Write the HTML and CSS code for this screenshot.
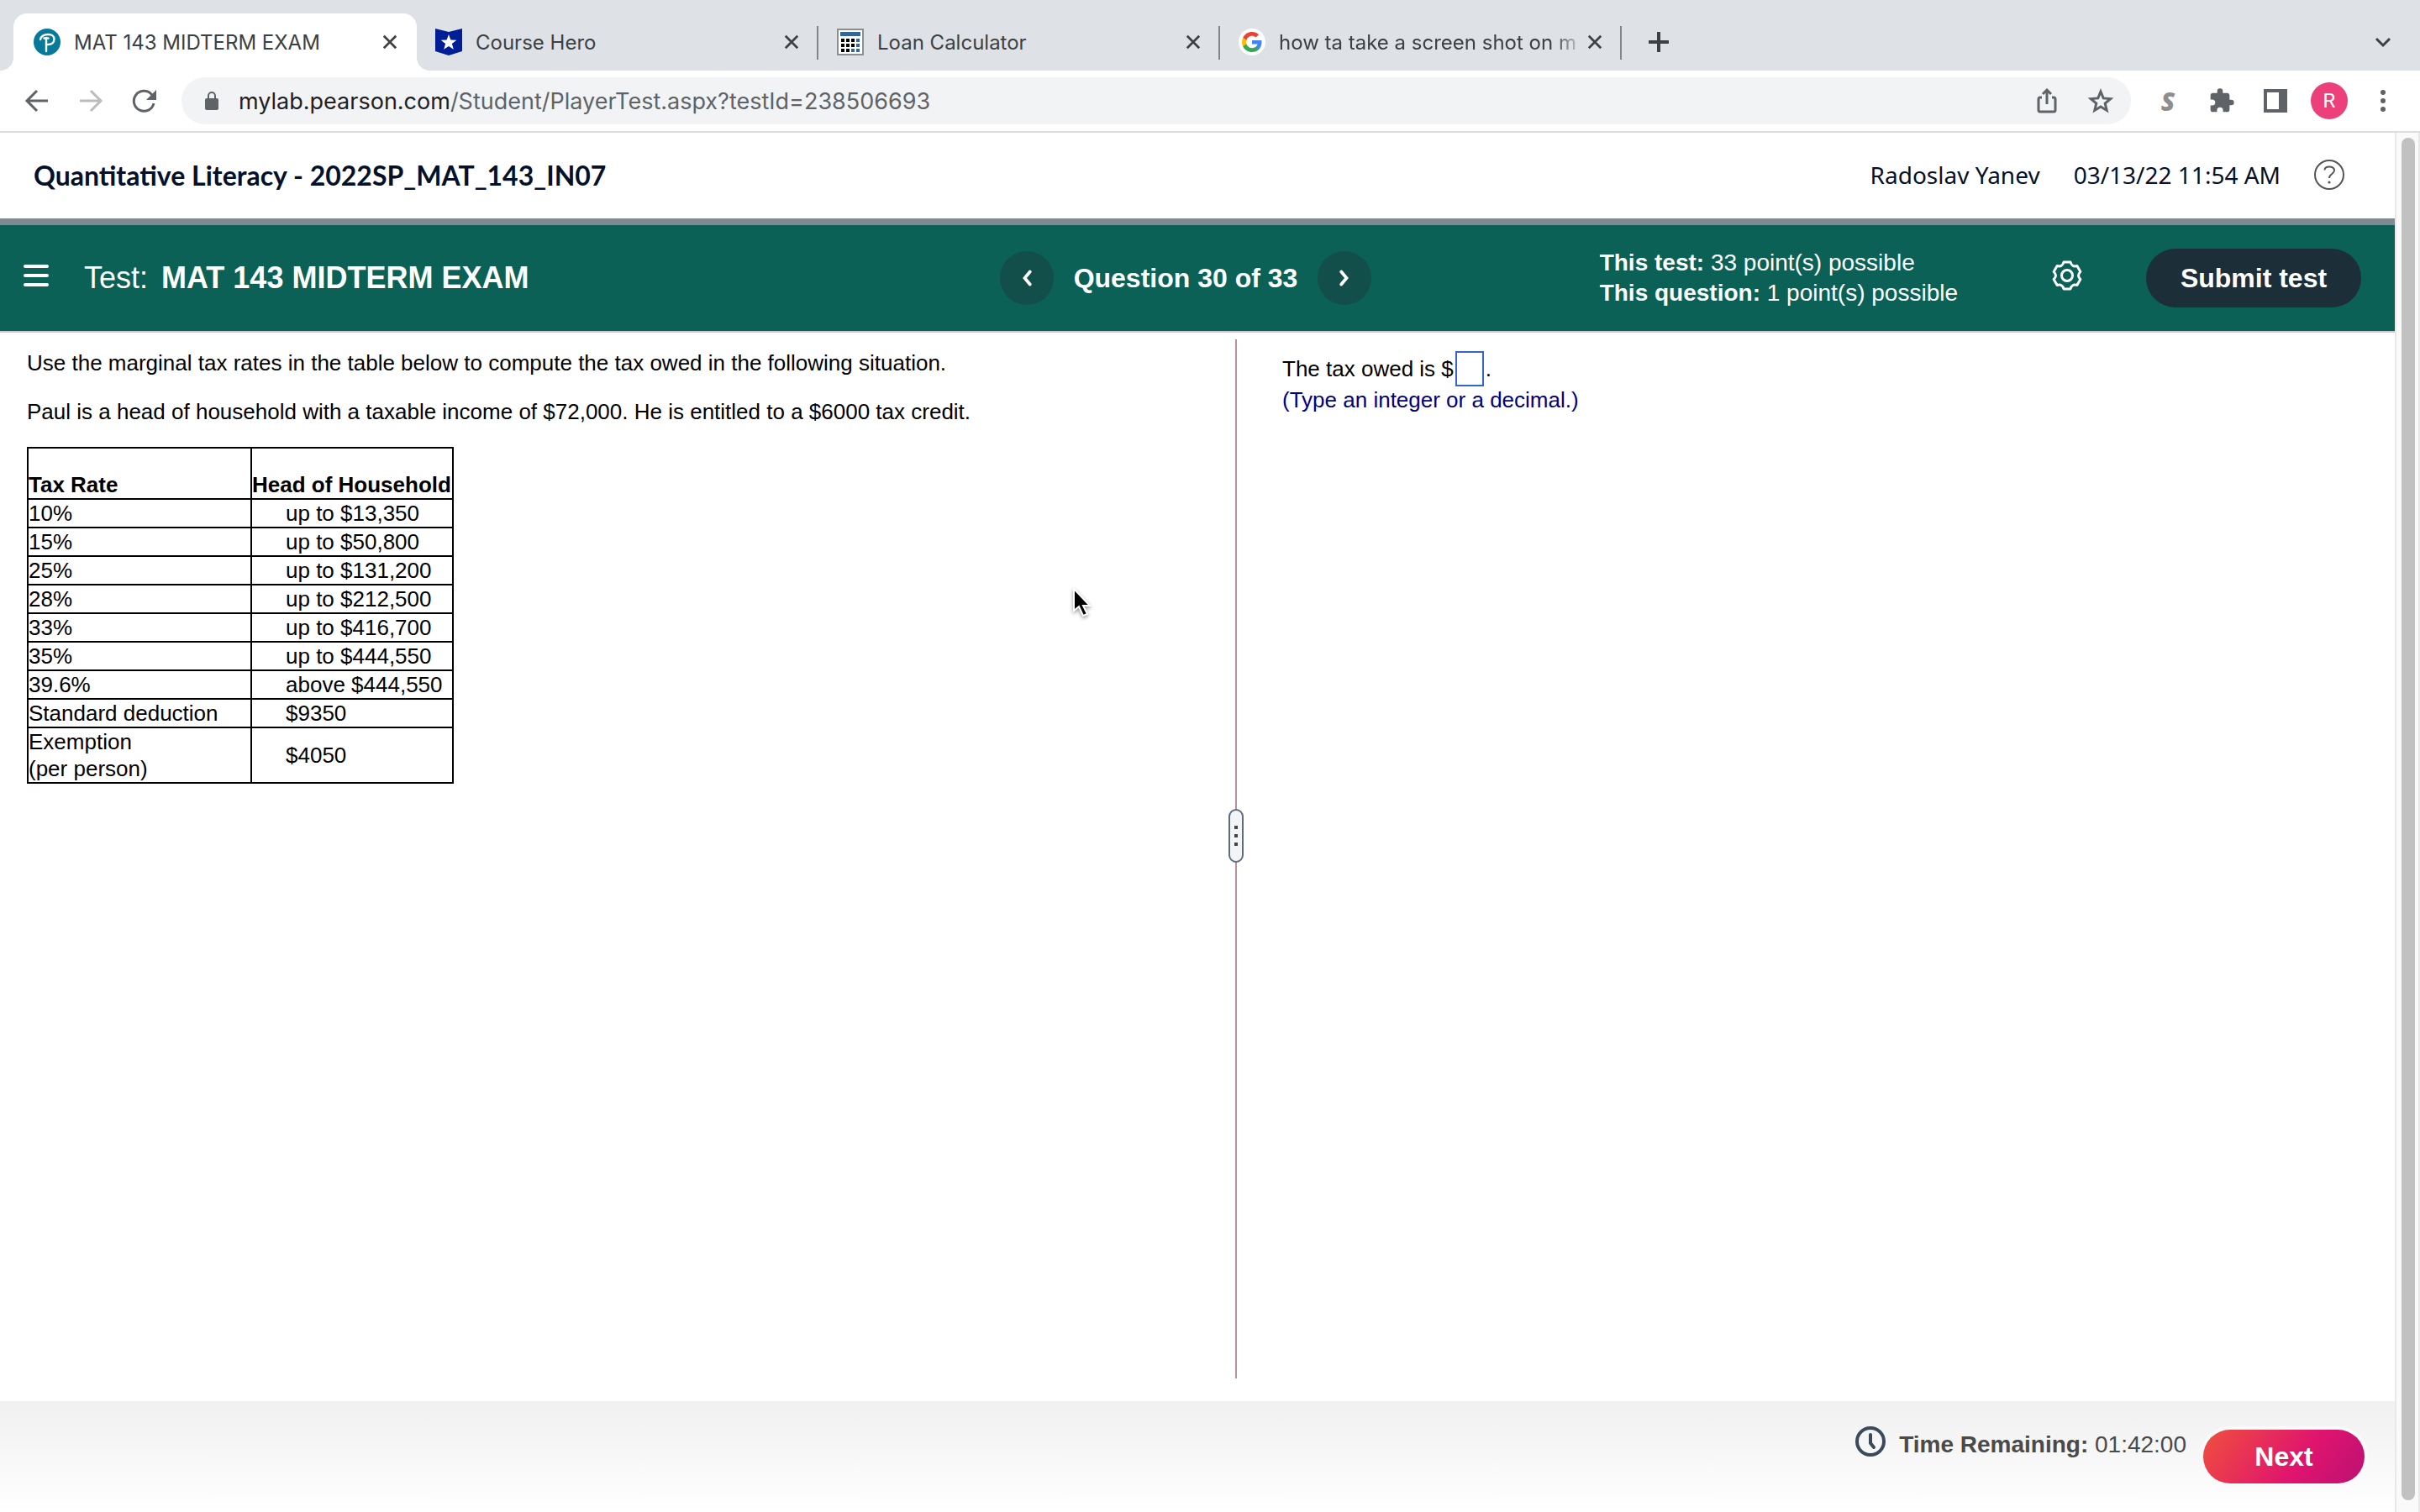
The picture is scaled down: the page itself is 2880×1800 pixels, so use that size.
FILE: index.html
```html
<!DOCTYPE html>
<html lang="en">
<head>
<meta charset="utf-8">
<title>MAT 143 MIDTERM EXAM</title>
<link rel="stylesheet" href="styles.css">
</head>
<body>
<div class="browser">
  <nav class="tabstrip" aria-label="Tabs">
    <div class="tab tab-active">
      <svg class="favicon" viewBox="0 0 32 32" aria-hidden="true"><circle cx="16" cy="16" r="16" fill="#077a9b"/><path d="M8 13c1-4 5-6 9.500-6 4 0 7 2 7 5.500 0 4-3 6.500-7.500 6.500M15 11v16M12.500 11.500h5" fill="none" stroke="#fff" stroke-width="2.400" stroke-linecap="round"/></svg>
      <a class="tab-title" href="#">MAT 143 MIDTERM EXAM</a>
      <button class="icon-button tab-close" aria-label="Close tab"><svg viewBox="0 0 20 20"><path d="M2 2l16 16M18 2L2 18"/></svg></button>
    </div>
    <div class="tab">
      <svg class="favicon" viewBox="0 0 32 32" aria-hidden="true"><path d="M0 0l16 4 16-4v27l-16 5-16-5z" fill="#001e96"/><path d="M16 7l2.400 6.600 7 .2-5.500 4.300 1.900 6.700-5.800-3.900-5.800 3.900 1.900-6.700-5.500-4.300 7-.2z" fill="#fff"/></svg>
      <a class="tab-title" href="#">Course Hero</a>
      <button class="icon-button tab-close" aria-label="Close tab"><svg viewBox="0 0 20 20"><path d="M2 2l16 16M18 2L2 18"/></svg></button>
    </div>
    <div class="tab tab-divided">
      <svg class="favicon" viewBox="0 0 32 32" aria-hidden="true"><path d="M1 1h30v30H1z" fill="#fff" stroke="#8e8e8e" stroke-width="2"/><path d="M4 4h24v5H4z" fill="#336699"/><path d="M5 12h4v4H5zm6 0h4v4h-4zm6 0h4v4h-4zM5 18h4v4H5zm6 0h4v4h-4zm6 0h4v4h-4zM5 24h4v4H5zm6 0h4v4h-4z" fill="#000"/><path d="M23 12h4v4h-4zm0 6h4v4h-4zm0 6h4v4h-4zm-6 0h4v4h-4z" fill="#336699"/></svg>
      <a class="tab-title" href="#">Loan Calculator</a>
      <button class="icon-button tab-close" aria-label="Close tab"><svg viewBox="0 0 20 20"><path d="M2 2l16 16M18 2L2 18"/></svg></button>
    </div>
    <div class="tab tab-divided tab-last">
      <svg class="favicon" viewBox="0 0 32 32" aria-hidden="true"><circle cx="16" cy="16" r="16" fill="#fff"/><g transform="translate(4 4)"><path fill="#4285F4" d="M23.500 12.300c0-.8-.1-1.600-.2-2.300H12v4.500h6.500c-.3 1.500-1.100 2.700-2.400 3.600v3h3.900c2.200-2.100 3.500-5.200 3.500-8.800z"/><path fill="#34A853" d="M12 24c3.200 0 6-1.100 8-2.900l-3.900-3c-1.100.7-2.500 1.200-4.100 1.200-3.100 0-5.800-2.100-6.700-5h-4v3.100C3.300 21.300 7.300 24 12 24z"/><path fill="#FBBC05" d="M5.300 14.300c-.5-1.500-.5-3.100 0-4.600V6.600h-4c-1.700 3.400-1.700 7.400 0 10.800z"/><path fill="#EA4335" d="M12 4.800c1.800 0 3.300.6 4.600 1.800L20 3.200C17.900 1.200 15.200 0 12 0 7.300 0 3.300 2.700 1.300 6.600l4 3.100c.9-2.800 3.600-4.900 6.700-4.900z"/></g></svg>
      <a class="tab-title tab-title-fade" href="#">how ta take a screen shot on m</a>
      <button class="icon-button tab-close" aria-label="Close tab"><svg viewBox="0 0 20 20"><path d="M2 2l16 16M18 2L2 18"/></svg></button>
    </div>
    <button class="icon-button new-tab" aria-label="New tab"><svg viewBox="0 0 24 24"><path d="M12 1v22M1 12h22"/></svg></button>
    <button class="icon-button tab-search" aria-label="Search tabs"><svg viewBox="0 0 20 20"><path d="M2 6l8 8 8-8"/></svg></button>
  </nav>

  <div class="toolbar">
    <div class="tool-group">
      <button class="icon-button tool" aria-label="Back"><svg viewBox="0 0 32 32"><path d="M29 16H4M16 4L4 16l12 12"/></svg></button>
      <button class="icon-button tool tool-off" aria-label="Forward"><svg viewBox="0 0 32 32"><path d="M3 16h25M16 4l12 12-12 12"/></svg></button>
      <button class="icon-button tool" aria-label="Reload"><svg viewBox="0 0 32 32"><path d="M27 19a12 12 0 1 1-3-11l3 3"/><path d="M30 3v12H18z" class="solid"/></svg></button>
    </div>
    <div class="omnibox">
      <svg class="lock" viewBox="0 0 16 22" aria-hidden="true"><path d="M4 9V5a4 4 0 0 1 8 0v4" fill="none" stroke="#5f6368" stroke-width="2"/><rect y="8" width="16" height="14" rx="2" fill="#5f6368"/></svg>
      <a class="url" href="#"><span class="url-host">mylab.pearson.com</span>/Student/PlayerTest.aspx?testId=238506693</a>
      <button class="icon-button tool" aria-label="Share"><svg viewBox="0 0 32 32"><path d="M10 12H8a2 2 0 0 0-2 2v13a2 2 0 0 0 2 2h16a2 2 0 0 0 2-2V14a2 2 0 0 0-2-2h-2M16 20V4M11 8l5-5 5 5"/></svg></button>
      <button class="icon-button tool" aria-label="Bookmark"><svg viewBox="0 0 32 32"><path d="M16 5l3.200 7.900 8.500.7-6.500 5.500 2 8.300-7.200-4.500-7.200 4.500 2-8.300-6.500-5.500 8.500-.7z"/></svg></button>
    </div>
    <div class="tool-group">
      <button class="icon-button ext-s" aria-label="Scribe">S</button>
      <button class="icon-button tool" aria-label="Extensions"><svg viewBox="0 0 24 24"><path class="solid" d="M20.500 11H19V7c0-1.100-.9-2-2-2h-4V3.500a2.500 2.500 0 0 0-5 0V5H4c-1.100 0-2 .9-2 2v3.800h1.500a2.700 2.700 0 0 1 0 5.400H2V20c0 1.100.9 2 2 2h3.800v-1.500a2.700 2.700 0 0 1 5.400 0V22H17c1.100 0 2-.9 2-2v-4h1.500a2.500 2.500 0 0 0 0-5z"/></svg></button>
      <button class="icon-button tool" aria-label="Side panel"><svg viewBox="0 0 32 32"><path class="solid" fill-rule="evenodd" d="M2 2h28v28H2zM6 6v20h14V6z"/></svg></button>
      <button class="avatar" aria-label="Profile">R</button>
      <button class="icon-button tool" aria-label="Menu"><svg viewBox="0 0 32 32"><circle class="solid" cx="16" cy="6" r="3"/><circle class="solid" cx="16" cy="16" r="3"/><circle class="solid" cx="16" cy="26" r="3"/></svg></button>
    </div>
  </div>

  <div class="viewport">
    <div class="page">
      <header class="course-bar">
        <h1 class="course-name">Quantitative Literacy - 2022SP_MAT_143_IN07</h1>
        <span class="user">Radoslav Yanev</span>
        <time class="user">03/13/22 11:54 AM</time>
        <button class="icon-button help" aria-label="Help"><svg viewBox="0 0 36 36"><circle cx="18" cy="18" r="17"/><path d="M12.500 12.500c0-2.500 2-4 5.500-4s6 1.500 6 4.500c0 4-6 4-6 9"/><circle class="solid" cx="18" cy="27" r="1.600"/></svg></button>
      </header>

      <section class="test-bar">
        <div class="test-name">
          <button class="icon-button menu" aria-label="Open menu"><svg viewBox="0 0 30 28"><path d="M2 3h26M2 14h26M2 25h26"/></svg></button>
          <span>Test:</span>
          <h2 class="test-title">MAT 143 MIDTERM EXAM</h2>
        </div>
        <div class="question-nav">
          <button class="round" aria-label="Previous question"><svg viewBox="0 0 16 16"><path d="M11 2L6 8l5 6"/></svg></button>
          <strong>Question 30 of 33</strong>
          <button class="round" aria-label="Next question"><svg viewBox="0 0 16 16"><path d="M5 2l5 6-5 6"/></svg></button>
        </div>
        <div class="test-side">
          <p class="points"><strong>This test:</strong> 33 point(s) possible<br><strong>This question:</strong> 1 point(s) possible</p>
          <button class="icon-button gear" aria-label="Settings"><svg viewBox="-18 -18 36 36"><path d="M-4-16H4Q5.600-9.700 11.860-11.460L15.860-4.540Q11.200 0 15.860 4.540L11.860 11.460Q5.600 9.700 4 16H-4Q-5.600 9.700-11.860 11.460L-15.860 4.540Q-11.200 0-15.860-4.540L-11.860-11.460Q-5.600-9.700-4-16z"/><circle r="6.500"/></svg></button>
          <button class="submit">Submit test</button>
        </div>
      </section>

      <main class="panes">
        <section class="question">
          <p>Use the marginal tax rates in the table below to compute the tax owed in the following situation.</p>
          <p>Paul is a head of household with a taxable income of $72,000. He is entitled to a $6000 tax credit.</p>
          <table class="rates">
            <thead><tr><th scope="col">Tax Rate</th><th scope="col">Head of Household</th></tr></thead>
            <tbody>
              <tr><td>10%</td><td>up to $13,350</td></tr>
              <tr><td>15%</td><td>up to $50,800</td></tr>
              <tr><td>25%</td><td>up to $131,200</td></tr>
              <tr><td>28%</td><td>up to $212,500</td></tr>
              <tr><td>33%</td><td>up to $416,700</td></tr>
              <tr><td>35%</td><td>up to $444,550</td></tr>
              <tr><td>39.6%</td><td>above $444,550</td></tr>
              <tr><td>Standard deduction</td><td>$9350</td></tr>
              <tr><td>Exemption<br>(per person)</td><td>$4050</td></tr>
            </tbody>
          </table>
        </section>
        <div class="splitter"><button class="grip" aria-label="Resize panes"><i></i><i></i><i></i></button></div>
        <section class="answer">
          <div class="answer-line"><label for="tax">The tax owed is $</label><input id="tax" class="blank" type="text"><span>.</span></div>
          <p class="hint">(Type an integer or a decimal.)</p>
        </section>
      </main>

      <footer class="footer">
        <svg class="clock" viewBox="0 0 36 36" aria-hidden="true"><circle cx="18" cy="18" r="16"/><path d="M18 10v10l4 5"/></svg>
        <p class="remaining"><strong>Time Remaining:</strong> <time>01:42:00</time></p>
        <button class="next">Next</button>
      </footer>
    </div>
    <div class="scrollbar" aria-hidden="true"><div class="thumb"></div></div>
  </div>
</div>
<svg class="pointer" viewBox="0 0 24 36" aria-hidden="true"><path d="M2 2v26l6-5 5 11 5-2-5-10h8z" fill="#000" stroke="#fff" stroke-width="2"/></svg>
</body>
</html>
```
FILE: styles.css
```css
* { box-sizing: border-box; }

body {
  margin: 0;
  font-family: "Liberation Sans", Arial, sans-serif;
  color: #000;
  background: #fff;
}

p, h1, h2 { margin: 0; }
a { color: inherit; text-decoration: none; }
button { font: inherit; color: inherit; border: 0; padding: 0; }
svg { display: block; }

.browser { display: flex; flex-direction: column; min-height: 100vh; }

.icon-button { background: none; flex: none; }
.icon-button svg {
  width: 100%;
  height: 100%;
  fill: none;
  stroke: currentColor;
  stroke-width: 3;
}
.icon-button svg .solid { fill: currentColor; stroke: none; }

/* Tab strip */
.tabstrip {
  display: flex;
  align-items: center;
  height: 84px;
  padding: 16px 34px 0 16px;
  background: #dee1e6;
  font-family: Inter, sans-serif;
  font-size: 24px;
  color: #3c4043;
}
.tab {
  position: relative;
  display: flex;
  align-items: center;
  gap: 16px;
  width: 478px;
  height: 68px;
  padding: 0 22px;
}
.tab-active {
  width: 480px;
  padding: 0 22px 0 24px;
  background: #fff;
  border-radius: 16px 16px 0 0;
}
.tab-active::before,
.tab-active::after {
  content: "";
  position: absolute;
  bottom: 0;
  width: 16px;
  height: 16px;
}
.tab-active::before { right: 100%; background: radial-gradient(circle at 0 0, #dee1e6 16px, #fff 16px); }
.tab-active::after { left: 100%; background: radial-gradient(circle at 100% 0, #dee1e6 16px, #fff 16px); }
.tab-divided::before,
.tab-last::after {
  content: "";
  position: absolute;
  left: -2px;
  top: 15px;
  width: 2px;
  height: 40px;
  background: #80868b;
}
.tab-last::after { left: auto; right: 0; }
.favicon { width: 32px; height: 32px; flex: none; }
.tab-title { flex: 1; white-space: nowrap; }
.tab-title-fade { margin-right: -12px; mask-image: linear-gradient(90deg, #000 90%, transparent); }
.tab-close { width: 18px; height: 18px; margin-right: 1px; }
.new-tab { width: 24px; height: 24px; margin-left: 32px; }
.new-tab svg { stroke-width: 4; stroke-linecap: round; }
.tab-search { width: 20px; height: 20px; margin-left: auto; }

/* Toolbar */
.toolbar {
  display: flex;
  align-items: center;
  gap: 28px;
  height: 74px;
  padding: 0 28px;
  border-bottom: 2px solid #dadce0;
  color: #5f6368;
}
.tool-group { display: flex; align-items: center; gap: 32px; }
.tool { width: 32px; height: 32px; }
.tool-off { color: #babcbe; }
.omnibox {
  display: flex;
  align-items: center;
  flex: 1;
  gap: 32px;
  height: 56px;
  padding: 0 20px 0 28px;
  border-radius: 28px;
  background: #f1f3f4;
}
.lock { width: 16px; height: 22px; }
.url {
  flex: 1;
  margin-left: -8px;
  font-family: Inter, sans-serif;
  font-size: 27px;
}
.url-host { color: #202124; }
.ext-s {
  width: 32px;
  font-size: 30px;
  font-weight: 800;
  font-style: italic;
  font-family: "Open Sans", sans-serif;
  color: #8e8e8e;
}
.avatar {
  width: 44px;
  height: 44px;
  margin: 0 -6px;
  border-radius: 50%;
  background: #ec407a;
  color: #fff;
  font-family: Roboto, sans-serif;
  font-size: 24px;
}

/* Page and scroll bar */
.viewport { display: flex; flex: 1; }
.page { display: flex; flex-direction: column; flex: 1; }
.scrollbar {
  width: 30px;
  padding: 6px 4px 14px 6px;
  border: solid #e8e8e8;
  border-width: 0 2px;
  background: #fafafa;
}
.thumb { width: 16px; height: 100%; border-radius: 8px; background: #c1c1c1; }

/* Course bar */
.course-bar {
  display: flex;
  align-items: center;
  gap: 40px;
  height: 110px;
  padding: 0 60px 2px 40px;
  border-bottom: 8px solid #808a93;
  color: #05112a;
}
.course-name {
  flex: 1;
  font-family: Lato, sans-serif;
  font-size: 32px;
  font-weight: bold;
}
.user { font-family: "Noto Sans", sans-serif; font-size: 28px; }
.help { width: 36px; height: 36px; color: #555; }
.help svg { stroke-width: 2; }

/* Test bar */
.test-bar {
  display: grid;
  grid-template-columns: 1fr auto 1fr;
  align-items: center;
  height: 128px;
  padding: 0 40px 0 12px;
  border-bottom: 2px solid #c7cbd8;
  background: #0b6156;
  color: #fff;
}
.test-name { display: flex; align-items: center; font-size: 36px; }
.menu { width: 30px; height: 28px; margin: 0 42px 6px 16px; }
.menu svg { stroke-width: 4; stroke-linecap: round; }
.test-title { margin-left: 16px; font-size: 36px; }
.question-nav { display: flex; align-items: center; gap: 24px; font-size: 32px; }
.round {
  display: grid;
  place-items: center;
  width: 64px;
  height: 64px;
  border-radius: 50%;
  background: #124f4b;
}
.round svg { width: 20px; height: 20px; fill: none; stroke: #fff; stroke-width: 3; stroke-linecap: round; }
.test-side { display: flex; align-items: center; justify-content: flex-end; }
.points { font-size: 28px; line-height: 36px; }
.gear { width: 36px; height: 36px; margin: 0 76px 6px 112px; }
.gear svg { stroke-linejoin: round; }
.submit {
  width: 256px;
  height: 70px;
  border-radius: 35px;
  background: #1c2e38;
  font-size: 32px;
  font-weight: bold;
}

/* Question and answer panes */
.panes {
  display: grid;
  grid-template-columns: 1462fr 18px 1370fr;
  flex: 1;
  font-size: 26px;
  line-height: 32px;
}
.question { padding: 20px 32px; }
.question p { margin-bottom: 26px; }
.rates { border-collapse: collapse; }
.rates th, .rates td { padding: 0; border: 2px solid #000; text-align: left; }
.rates th { width: 240px; height: 61px; vertical-align: bottom; }
.rates th:first-child { width: 266px; }
.rates td:last-child { padding-left: 40px; }
.splitter {
  display: flex;
  flex-direction: column;
  margin: 8px 0 27px;
  background: linear-gradient(#b98fa2, #b98fa2) center / 2px 100% no-repeat;
}
.splitter::before { content: ""; flex: 10; }
.splitter::after { content: ""; flex: 11; }
.grip {
  display: flex;
  flex-direction: column;
  align-items: center;
  justify-content: center;
  gap: 6px;
  width: 18px;
  height: 64px;
  border: 2px solid #5f6d7b;
  border-radius: 9px;
  background: #f2f4f8;
}
.grip i { width: 4px; height: 4px; background: #444; }
.answer { padding: 22px 46px; }
.answer-line { display: flex; align-items: center; }
.blank {
  width: 34px;
  height: 42px;
  margin: 0 2px;
  padding: 0;
  border: 2px solid #36c;
  font: inherit;
}
.hint { color: #000080; }

/* Footer */
.footer {
  display: flex;
  align-items: center;
  height: 132px;
  padding: 0 36px;
  justify-content: flex-end;
  background: linear-gradient(#f0f0f0, #fff);
  color: #4a4a4a;
  font-size: 28px;
}
.clock { width: 36px; height: 36px; margin: 0 16px 36px 0; fill: none; stroke: #3b4a5a; stroke-width: 4; stroke-linecap: round; }
.remaining { margin: 0 20px 28px 0; }
.next {
  width: 192px;
  height: 64px;
  border-radius: 32px;
  background: linear-gradient(125deg, #ef503d, #e0146e 60%, #bb1173);
  box-shadow: 0 0 0 4px #fafafa;
  color: #fff;
  font-size: 32px;
  font-weight: bold;
}

.pointer {
  position: absolute;
  left: 1276px;
  top: 699px;
  width: 24px;
  height: 36px;
  filter: drop-shadow(0 2px 2px rgba(0, 0, 0, .4));
}
```
